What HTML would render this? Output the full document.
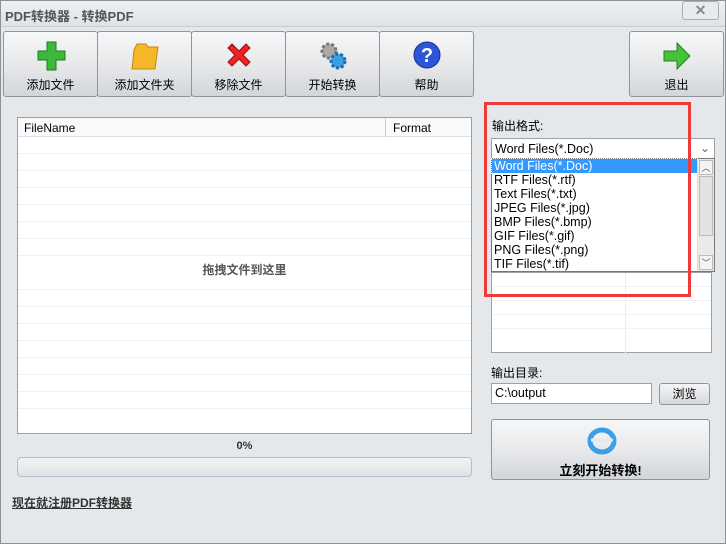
<!DOCTYPE html><html><head><meta charset="utf-8"><style>
*{margin:0;padding:0;box-sizing:border-box}
body{width:726px;height:544px;background:#e4e8eb;font-family:"Liberation Sans","Noto Sans CJK SC",sans-serif;font-size:12px;color:#000;position:relative;overflow:hidden}
.a{position:absolute}
.btn{position:absolute;top:31px;height:66px;border:1px solid #8e959b;border-radius:3px;background:linear-gradient(#f6f7f8,#e7e9eb 50%,#d3d6d9);text-align:center}
.btn .t{position:absolute;bottom:3px;left:0;right:0;font-size:12px}
.btn svg{position:absolute;left:50%;top:8px;margin-left:-16px}
.row{position:absolute;left:0;right:0;height:1px;background:#eef0f2}
.dl div{padding-left:2px;font-size:12.5px}
</style></head><body>
<div class="a" style="left:0;top:0;width:726px;height:544px;border:1px solid #8a9299"></div>
<div class="a" style="left:1px;top:1px;width:724px;height:26px;background:linear-gradient(#eef0f2,#dfe3e6);border-bottom:1px solid #c8cdd1"></div>
<div class="a" style="left:5px;top:6px;font-weight:bold;font-size:13px;color:#555">PDF转换器 - 转换PDF</div>
<div class="a" style="left:682px;top:1px;width:37px;height:19px;border:1px solid #aab;border-radius:3px;background:#e8eaec;text-align:center;color:#888;font-size:14px;line-height:17px;font-weight:bold">✕</div>

<div class="btn" style="left:3px;width:95px"><svg width="32" height="32"><path d="M12 2h9v9h9v9h-9v10h-9v-10H3v-9h9z" fill="#3cb83a" stroke="#1f7a1f"/></svg><div class="t">添加文件</div></div>
<div class="btn" style="left:97px;width:95px"><svg width="32" height="32"><path d="M5 10l3-6h9l2 3h10l-3 22H3z" fill="#f6b62a" stroke="#c9860e"/></svg><div class="t">添加文件夹</div></div>
<div class="btn" style="left:191px;width:95px"><svg width="32" height="32"><path d="M5 8l4-4 7 7 7-7 4 4-7 7 7 7-4 4-7-7-7 7-4-4 7-7z" fill="#e22" stroke="#911"/></svg><div class="t">移除文件</div></div>
<div class="btn" style="left:285px;width:95px"><svg width="32" height="32"><circle cx="12" cy="11" r="7" fill="#aaa" stroke="#777" stroke-width="3" stroke-dasharray="3 2"/><circle cx="21" cy="21" r="7" fill="#3a9ee8" stroke="#1d6eb0" stroke-width="3" stroke-dasharray="3 2"/></svg><div class="t">开始转换</div></div>
<div class="btn" style="left:379px;width:95px"><svg width="32" height="32"><circle cx="16" cy="15" r="13" fill="#2c55d8" stroke="#1a2f8a"/><text x="16" y="22" font-size="20" font-weight="bold" fill="#fff" text-anchor="middle" font-family="Liberation Sans">?</text></svg><div class="t">帮助</div></div>
<div class="btn" style="left:629px;width:95px"><svg width="32" height="32"><path d="M3 11h13V3l13 13-13 13v-8H3z" fill="#46c23a" stroke="#2a7f23"/></svg><div class="t">退出</div></div>

<div class="a" style="left:17px;top:117px;width:455px;height:317px;border:1px solid #9aa0a6;background:#fff;overflow:hidden">
<div class="a" style="left:0;top:0;width:100%;height:19px;background:#fafafa;border-bottom:1px solid #dde"></div>
<div class="a" style="left:6px;top:3px">FileName</div>
<div class="a" style="left:367px;top:0;width:1px;height:19px;background:#ccc"></div>
<div class="a" style="left:375px;top:3px">Format</div>
<div class="row" style="top:35px"></div><div class="row" style="top:52px"></div><div class="row" style="top:69px"></div><div class="row" style="top:86px"></div><div class="row" style="top:103px"></div><div class="row" style="top:120px"></div><div class="row" style="top:137px"></div><div class="row" style="top:171px"></div><div class="row" style="top:188px"></div><div class="row" style="top:205px"></div><div class="row" style="top:222px"></div><div class="row" style="top:239px"></div><div class="row" style="top:256px"></div><div class="row" style="top:273px"></div><div class="row" style="top:290px"></div>
<div class="a" style="left:0;right:0;top:143px;text-align:center;color:#555;font-weight:bold">拖拽文件到这里</div>
</div>
<div class="a" style="left:17px;top:440px;width:455px;text-align:center;font-size:11px;font-weight:bold;color:#333">0%</div>
<div class="a" style="left:17px;top:457px;width:455px;height:20px;border:1px solid #bbc;border-radius:4px;background:linear-gradient(#f2f3f4,#dfe2e4)"></div>
<div class="a" style="left:12px;top:494px;font-weight:bold;text-decoration:underline;color:#333">现在就注册PDF转换器</div>

<div class="a" style="left:491px;top:272px;width:221px;height:81px;border:1px solid #9aa0a6;background:#fff">
<div class="a" style="left:133px;top:0;width:1px;height:80px;background:#eee"></div>
<div class="row" style="top:13px"></div><div class="row" style="top:27px"></div><div class="row" style="top:41px"></div><div class="row" style="top:55px"></div></div>
<div class="a" style="left:492px;top:117px">输出格式:</div>
<div class="a" style="left:491px;top:138px;width:224px;height:21px;border:1px solid #9aa0a6;background:#fff"><span class="a" style="left:3px;top:3px;font-size:12.5px">Word Files(*.Doc)</span><span class="a" style="right:4px;top:2px;color:#666">⌄</span></div>
<div class="a dl" style="left:491px;top:158px;width:224px;height:114px;border:1px solid #777;background:#fff;line-height:14px">
<div style="background:#3399ff;color:#fff;width:205px;outline:1px dotted #fff">Word Files(*.Doc)</div>
<div>RTF Files(*.rtf)</div><div>Text Files(*.txt)</div><div>JPEG Files(*.jpg)</div><div>BMP Files(*.bmp)</div><div>GIF Files(*.gif)</div><div>PNG Files(*.png)</div><div>TIF Files(*.tif)</div>
<div class="a" style="right:0;top:0;width:17px;height:112px;background:#eaeaea;border-left:1px solid #ddd;padding:0"><div class="a" style="left:1px;top:1px;width:14px;height:15px;border:1px solid #bbb;background:#f4f4f4;font-size:9px;text-align:center;color:#555;padding:0">︿</div><div class="a" style="left:1px;top:17px;width:14px;height:60px;border:1px solid #bbb;background:#e2e2e2"></div><div class="a" style="left:1px;bottom:1px;width:14px;height:15px;border:1px solid #bbb;background:#f4f4f4;font-size:9px;text-align:center;color:#555;padding:0">﹀</div></div>
</div>
<div class="a" style="left:484px;top:102px;width:207px;height:195px;border:3px solid #f03a3a"></div>

<div class="a" style="left:491px;top:364px">输出目录:</div>
<div class="a" style="left:491px;top:383px;width:161px;height:21px;border:1px solid #9aa0a6;background:#fff;padding:2px 3px;font-size:12.5px">C:\output</div>
<div class="a" style="left:659px;top:383px;width:51px;height:22px;border:1px solid #8e959b;border-radius:3px;background:linear-gradient(#f4f5f6,#d6d9dc);text-align:center;line-height:20px">浏览</div>
<div class="a" style="left:491px;top:419px;width:219px;height:61px;border:1px solid #8e959b;border-radius:3px;background:linear-gradient(#f6f7f8,#e7e9eb 50%,#d3d6d9);text-align:center">
<svg width="30" height="30" style="position:absolute;left:95px;top:6px"><ellipse cx="15" cy="15" rx="12" ry="11" fill="none" stroke="#3a9ee8" stroke-width="5"/><path d="M4 14h22" stroke="#e6eaee" stroke-width="3"/></svg>
<div class="a" style="left:0;right:0;top:40px;font-weight:bold;font-size:13px">立刻开始转换!</div></div>
</body></html>
